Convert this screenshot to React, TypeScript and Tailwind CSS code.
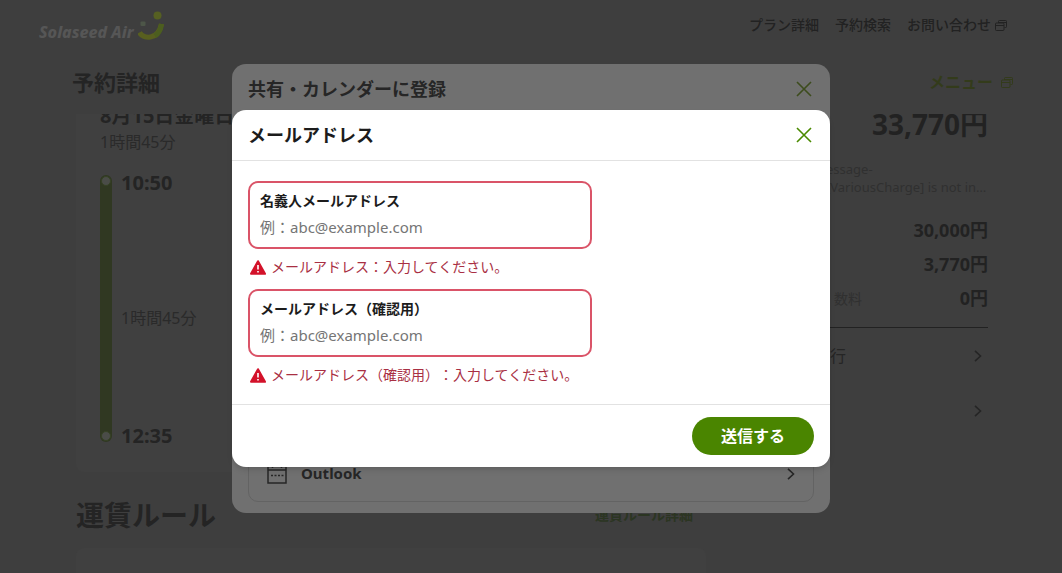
import React from "react";

const fontStack =
  "font-['Noto_Sans','Noto_Sans_CJK_JP',sans-serif] [text-spacing-trim:space-all]";

function Logo() {
  return (
    <a href="#" aria-label="Solaseed Air" className="flex items-end gap-1 text-[#565656]">
      <span className="text-[16px] leading-5 font-extrabold italic">Solaseed Air</span>
      <svg width="28" height="32" viewBox="0 0 28 32" aria-hidden="true">
        <rect x="2.500" y="11.500" width="5" height="4.500" rx="1" fill="#4d5648" />
        <circle cx="19.500" cy="5.500" r="4" fill="#566022" />
        <path d="M1.500 22.500C5 29 20 31 23.500 14" fill="none" stroke="#585f1f" strokeWidth="5.2" />
        <path d="M17 26C20 24 23 19 23.500 14" fill="none" stroke="#4c5e1f" strokeWidth="5" />
      </svg>
    </a>
  );
}

function WindowsIcon() {
  return (
    <svg width="12" height="11" viewBox="0 0 12 11" fill="none" stroke="currentColor" aria-hidden="true">
      <path d="M3.500 3V1.500a1 1 0 0 1 1-1h6a1 1 0 0 1 1 1v5a1 1 0 0 1-1 1H9.500" />
      <rect x="0.500" y="3" width="8.500" height="7.500" rx="1" />
      <path d="M0.500 5.500H9M4 2.500h7" />
    </svg>
  );
}

function CloseIcon() {
  return (
    <svg width="16" height="16" viewBox="0 0 16 16" fill="none" stroke="currentColor" strokeWidth="1.6" aria-hidden="true">
      <path d="M1 1l14 14M15 1L1 15" />
    </svg>
  );
}

function ChevronIcon() {
  return (
    <svg width="8" height="12" viewBox="0 0 8 12" fill="none" stroke="currentColor" strokeWidth="1.6" aria-hidden="true">
      <path d="M1 0.800L6.500 6L1 11.200" />
    </svg>
  );
}

function CalendarIcon() {
  return (
    <svg width="20" height="20" viewBox="0 0 20 20" fill="none" stroke="currentColor" strokeWidth="1.5" aria-hidden="true">
      <path d="M1 2.500h18v16.500H1zM1 6h18M5.500 0v4M14.500 0v4" />
      <path d="M4 11.500h2M7.500 11.500h2M11 11.500h2M14.500 11.500h2" />
    </svg>
  );
}

function WarningIcon() {
  return (
    <svg width="16" height="15" viewBox="0 0 16 15" aria-hidden="true">
      <path d="M8 1.200L15 13.800H1z" fill="#d3122a" stroke="#d3122a" strokeWidth="2" strokeLinejoin="round" />
      <path d="M8 5v4.500M8 11v1.600" stroke="#fff" strokeWidth="1.6" />
    </svg>
  );
}

function PageHeader() {
  return (
    <header className="h-[114px] shrink-0">
      <div className="flex items-start justify-between pt-[10px] pr-[55px] pl-[39px]">
        <Logo />
        <nav className="flex gap-4 pt-[5px] text-[14px] leading-5 font-medium text-[#222]">
          <a href="#">プラン詳細</a>
          <a href="#">予約検索</a>
          <a href="#" className="flex items-center gap-1">
            お問い合わせ
            <WindowsIcon />
          </a>
        </nav>
      </div>
      <div className="mt-6 flex items-center justify-between pr-[49px] pl-[72px]">
        <h1 className="text-[22px] leading-8 font-bold text-[#242424]">予約詳細</h1>
        <a href="#" className="flex items-center gap-2 text-[16px] leading-6 font-bold text-[#333b1b]">
          メニュー
          <WindowsIcon />
        </a>
      </div>
    </header>
  );
}

function Itinerary() {
  return (
    <section className="flow-root h-[358px] rounded-b-lg bg-[#404040] pl-6 text-[#2a2a2a]">
      <h2 className="-mt-3 text-[20px] leading-7 font-bold text-[#242424]">8月15日金曜日</h2>
      <p className="text-[16px] leading-6">1時間45分</p>
      <div className="mt-5 flex gap-[9px]">
        <div className="mt-px flex h-[267px] w-3 flex-col justify-between rounded-full bg-[#303822] p-px">
          <span className="size-[10px] rounded-full border border-[#364225] bg-[#4a4c48]" />
          <span className="size-[10px] rounded-full border border-[#364225] bg-[#4a4c48]" />
        </div>
        <div className="-mt-[5px] -mb-2 flex flex-col justify-between">
          <time className="text-[20px] leading-7 font-bold text-[#242424]">10:50</time>
          <span className="pt-4 text-[16px] leading-6">1時間45分</span>
          <time className="text-[20px] leading-7 font-bold text-[#242424]">12:35</time>
        </div>
      </div>
    </section>
  );
}

function Fare({ label, value }: { label?: string; value: string }) {
  return (
    <div className="flex h-[34px] items-center justify-between pl-2">
      <dt className="text-[14px] text-[#303030]">{label}</dt>
      <dd className="text-[18px] font-bold text-[#222]">{value}</dd>
    </div>
  );
}

function FareSummary() {
  return (
    <aside className="w-[162px] shrink-0 text-[#252525]">
      <div className="-mt-2 flex h-9 items-center justify-end">
        <strong className="text-[28px] leading-9 font-bold whitespace-nowrap text-[#222]">33,770円</strong>
      </div>
      <p className="mt-[18px] text-[13px] leading-[18px] whitespace-nowrap text-[#303030]">
        essage-
        <br />
        [VariousCharge] is not in…
      </p>
      <dl className="mt-[17px] border-b border-[#222] pb-3">
        <Fare value="30,000円" />
        <Fare value="3,770円" />
        <Fare label="数料" value="0円" />
      </dl>
      <a href="#" className="flex h-[55px] items-center justify-between pr-[6px] pl-1 text-[16px]">
        行
        <ChevronIcon />
      </a>
      <a href="#" aria-label="詳細" className="flex h-[55px] items-center justify-end pr-[6px]">
        <ChevronIcon />
      </a>
    </aside>
  );
}

function ReservationPage() {
  return (
    <div className="flex h-full flex-col bg-[#3e3e3e]">
      <PageHeader />
      <main className="flex flex-1 items-start gap-[120px] overflow-hidden pr-[74px] pl-[76px]">
        <div className="min-w-0 flex-1">
          <Itinerary />
          <div className="flex h-[76px] items-center justify-between pt-[10px]">
            <h2 className="text-[28px] leading-10 font-bold text-[#242424]">運賃ルール</h2>
            <a href="#" className="mr-[13px] text-[14px] leading-5 font-bold text-[#2b3522]">
              運賃ルール詳細
            </a>
          </div>
          <div className="h-40 rounded-lg bg-[#404040]" />
        </div>
        <FareSummary />
      </main>
    </div>
  );
}

function ShareDialog() {
  return (
    <section
      aria-label="共有・カレンダーに登録"
      className="flex min-h-[449px] w-full max-w-[598px] flex-col rounded-[14px] bg-[#707070] px-4 pb-[11px] text-[#262626]"
    >
      <div className="flex h-[50px] items-center justify-between pr-[2px]">
        <h2 className="text-[18px] leading-7 font-bold">共有・カレンダーに登録</h2>
        <button type="button" aria-label="閉じる" className="text-[#3d4c1d]">
          <CloseIcon />
        </button>
      </div>
      <a
        href="#"
        className="mt-auto flex h-[57px] items-center gap-[14px] rounded-[10px] border border-[#636363] px-[18px] text-[15px] font-bold"
      >
        <CalendarIcon />
        <span className="flex-1">Outlook</span>
        <ChevronIcon />
      </a>
    </section>
  );
}

function EmailField({ id, label, error }: { id: string; label: string; error: string }) {
  return (
    <div>
      <div className="max-w-[344px] rounded-[10px] border-2 border-[#da5468] px-[10px] py-2">
        <label htmlFor={id} className="block text-[14px] leading-5 font-bold text-[#1c1c1c]">
          {label}
        </label>
        <input
          id={id}
          type="email"
          placeholder="例：abc@example.com"
          aria-invalid="true"
          aria-describedby={`${id}-error`}
          className="mt-1 block h-6 w-full text-[15px] leading-6 text-[#1c1c1c] outline-none placeholder:text-[#757575]"
        />
      </div>
      <p id={`${id}-error`} className="mt-2 flex items-center gap-[5px] pl-[2px] text-[14px] leading-5 text-[#a92f43]">
        <WarningIcon />
        {error}
      </p>
    </div>
  );
}

function EmailDialog() {
  return (
    <form
      role="dialog"
      aria-labelledby="email-title"
      onSubmit={(e: React.FormEvent) => e.preventDefault()}
      className="w-full max-w-[598px] rounded-[14px] bg-white shadow-md"
    >
      <div className="flex h-[51px] items-center justify-between border-b border-[#e2e2e2] pr-[18px] pl-4">
        <h2 id="email-title" className="text-[18px] leading-7 font-bold text-[#1c1c1c]">
          メールアドレス
        </h2>
        <button type="button" aria-label="閉じる" className="text-[#4a8a00]">
          <CloseIcon />
        </button>
      </div>
      <div className="flex flex-col gap-3 px-4 pt-5 pb-[19px]">
        <EmailField id="email" label="名義人メールアドレス" error="メールアドレス：入力してください。" />
        <EmailField id="email-confirm" label="メールアドレス（確認用）" error="メールアドレス（確認用）：入力してください。" />
      </div>
      <div className="flex justify-end border-t border-[#e2e2e2] px-4 py-3">
        <button type="submit" className="h-[38px] rounded-full bg-[#4a8500] px-[29px] text-[16px] font-bold text-white">
          送信する
        </button>
      </div>
    </form>
  );
}

export default function App() {
  return (
    <div lang="ja" className={`relative h-screen overflow-hidden ${fontStack}`}>
      <ReservationPage />
      <div className="absolute inset-0 flex items-center justify-center pt-1">
        <ShareDialog />
      </div>
      <div className="absolute inset-0 flex items-center justify-center pt-1">
        <EmailDialog />
      </div>
    </div>
  );
}
